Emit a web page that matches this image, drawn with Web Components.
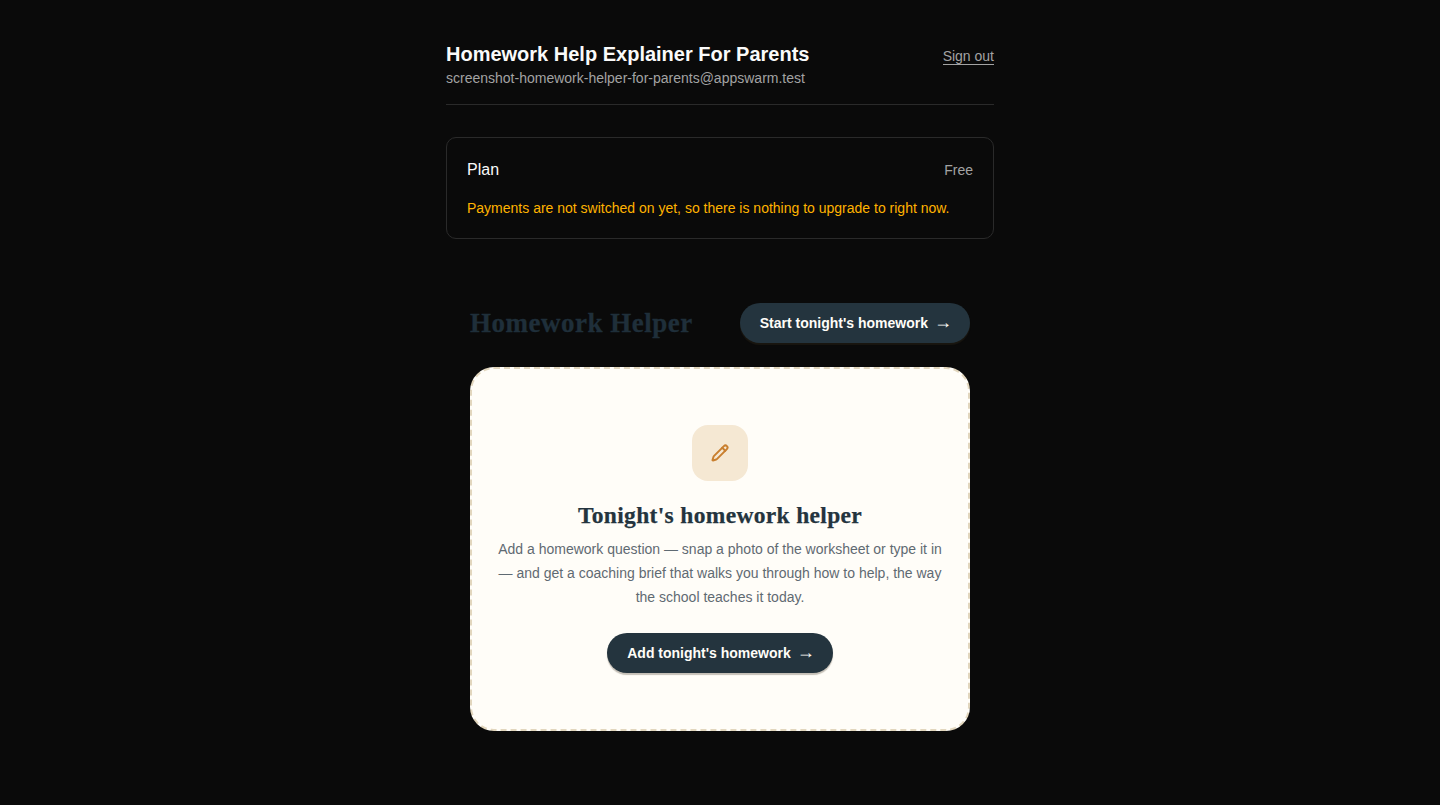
<!DOCTYPE html>
<html lang="en">
<head>
<meta charset="utf-8">
<title>Homework Help Explainer For Parents</title>
<style>
  html, body { margin: 0; background: #0a0a0a; }
  body { font-family: "Liberation Sans", Arial, sans-serif; }
</style>
</head>
<body>
<app-shell>
  <account-header title-text="Homework Help Explainer For Parents" email="screenshot-homework-helper-for-parents@appswarm.test"></account-header>
  <plan-card plan="Free">Payments are not switched on yet, so there is nothing to upgrade to right now.</plan-card>
  <helper-section heading="Homework Helper">
    <pill-button slot="action">Start tonight's homework</pill-button>
    <empty-state heading="Tonight's homework helper">
      <svg slot="icon" width="18" height="18" viewBox="0 0 24 24" fill="none" stroke="currentColor" stroke-width="2.6" stroke-linecap="round" stroke-linejoin="round"><path d="M21.17 6.81a2.82 2.82 0 0 0-3.99-3.99L3.84 16.17a2 2 0 0 0-.5.83l-1.32 4.35a.5.5 0 0 0 .62.62l4.35-1.32a2 2 0 0 0 .83-.5z"/><path d="m15 5 4 4"/></svg>
      Add a homework question — snap a photo of the worksheet or type it in — and get a coaching brief that walks you through how to help, the way the school teaches it today.
      <pill-button slot="action">Add tonight's homework</pill-button>
    </empty-state>
  </helper-section>
</app-shell>
<script>
const sharedStyle = `
:host { box-sizing: border-box; }
* { box-sizing: border-box; }
`;

function ensure(name, ctor) {
  if (!customElements.get(name)) {
    customElements.define(name, ctor);
  }
}

class AppShell extends HTMLElement {
  constructor() {
    super();
    const root = this.attachShadow({ mode: "open" });
    root.innerHTML = `
      <style>
        ${sharedStyle}
        :host { display: block; width: 548px; margin: 0 auto; padding-top: 42px; }
      </style>
      <slot></slot>
    `;
  }
}

class AccountHeader extends HTMLElement {
  constructor() {
    super();
    const root = this.attachShadow({ mode: "open" });
    root.innerHTML = `
      <style>
        ${sharedStyle}
        :host { display: flex; justify-content: space-between; align-items: flex-start; height: 63px; border-bottom: 1px solid #2a2a2a; }
        h1 { margin: 0; font-size: 20px; line-height: 24px; font-weight: 700; color: #fafafa; }
        p { margin: 2px 0 0; font-size: 14px; line-height: 20px; color: #a3a3a3; }
        a { margin-top: 6px; font-size: 14px; line-height: 16px; color: #a3a3a3; text-decoration: none; border-bottom: 1px solid #a3a3a3; }
      </style>
      <div>
        <h1>${this.getAttribute("title-text")}</h1>
        <p>${this.getAttribute("email")}</p>
      </div>
      <a href="#">Sign out</a>
    `;
  }
}

class PlanCard extends HTMLElement {
  constructor() {
    super();
    const root = this.attachShadow({ mode: "open" });
    root.innerHTML = `
      <style>
        ${sharedStyle}
        :host { display: block; height: 102px; margin-top: 32px; padding: 20px; border: 1px solid #2a2a2a; border-radius: 10px; }
        .row { display: flex; justify-content: space-between; align-items: center; height: 24px; }
        .name { font-size: 16px; color: #fafafa; }
        .value { font-size: 14px; color: #a3a3a3; }
        p { margin: 16px 0 0; font-size: 14px; line-height: 20px; color: #ffb300; }
      </style>
      <div class="row"><span class="name">Plan</span><span class="value">${this.getAttribute("plan")}</span></div>
      <p><slot></slot></p>
    `;
  }
}

class HelperSection extends HTMLElement {
  constructor() {
    super();
    const root = this.attachShadow({ mode: "open" });
    root.innerHTML = `
      <style>
        ${sharedStyle}
        :host { display: block; margin-top: 64px; padding: 0 24px; }
        header { display: flex; justify-content: space-between; align-items: center; height: 40px; margin-bottom: 24px; }
        h2 { margin: 0; font-family: "Liberation Serif", "DejaVu Serif", serif; font-size: 27px; letter-spacing: 0.5px; font-weight: 700; color: #1f2f3a; -webkit-text-stroke: 0.3px #1f2f3a; }
      </style>
      <header><h2>${this.getAttribute("heading")}</h2><slot name="action"></slot></header>
      <slot></slot>
    `;
  }
}

class PillButton extends HTMLElement {
  constructor() {
    super();
    const root = this.attachShadow({ mode: "open" });
    root.innerHTML = `
      <style>
        ${sharedStyle}
        :host { display: inline-flex; }
        button { display: inline-flex; align-items: center; gap: 6px; height: 40px; padding: 0 20px; border: 0; border-radius: 20px; background: #24343e; color: #fffdf8; font: 700 14px "Liberation Sans", Arial, sans-serif; box-shadow: 0 2px 1px rgba(60, 50, 30, .3); }
        .arrow { font-size: 18px; font-weight: 400; line-height: 18px; margin: -2px -2px 0 0; }
      </style>
      <button type="button"><slot></slot><span class="arrow">→</span></button>
    `;
  }
}

class EmptyState extends HTMLElement {
  constructor() {
    super();
    const root = this.attachShadow({ mode: "open" });
    root.innerHTML = `
      <style>
        ${sharedStyle}
        :host { display: flex; flex-direction: column; align-items: center; height: 364px; padding: 56px 24px 0; background: #fffdf8; border: 2px dashed #e2d6bd; border-radius: 24px; text-align: center; }
        .icon { display: flex; align-items: center; justify-content: center; width: 56px; height: 56px; border-radius: 16px; background: #f5e8d3; color: #c97f2e; }
        h3 { margin: 20px 0 0; font-family: "Liberation Serif", "DejaVu Serif", serif; font-size: 23.5px; line-height: 28px; letter-spacing: 0.33px; font-weight: 700; color: #24343e; -webkit-text-stroke: 0.25px #24343e; }
        p { margin: 8px 0 0; font-size: 14px; line-height: 24px; color: #5f6a72; }
        .action { margin-top: 24px; }
      </style>
      <div class="icon"><slot name="icon"></slot></div>
      <h3>${this.getAttribute("heading")}</h3>
      <p><slot></slot></p>
      <div class="action"><slot name="action"></slot></div>
    `;
  }
}

ensure("app-shell", AppShell);
ensure("account-header", AccountHeader);
ensure("plan-card", PlanCard);
ensure("helper-section", HelperSection);
ensure("pill-button", PillButton);
ensure("empty-state", EmptyState);
</script>
</body>
</html>
